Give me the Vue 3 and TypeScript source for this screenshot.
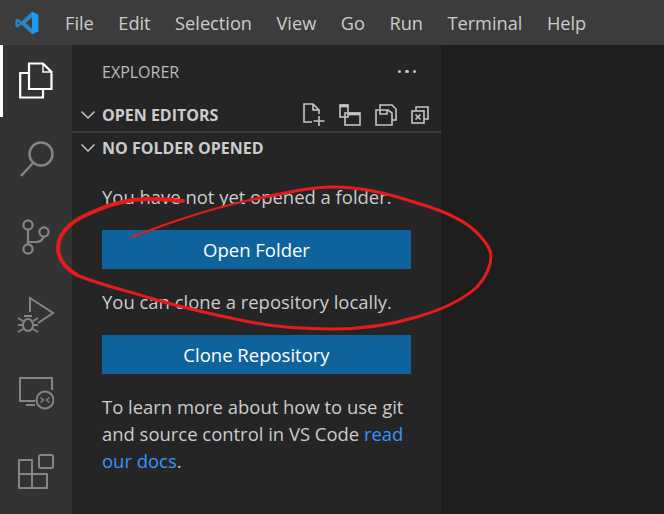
<script setup lang="ts">
const menus = ['File', 'Edit', 'Selection', 'View', 'Go', 'Run', 'Terminal', 'Help']
</script>

<template>
  <div class="window">
    <header class="titlebar">
      <svg class="logo" viewBox="0 0 26 26" width="24" height="24">
        <path d="M18.4 0.8 L25.2 4 V22 L18.4 25.2 L7 14.6 L2.8 18 L0.4 16.6 V9.4 L2.8 8 L7 11.4 Z M18.4 7.4 L11.4 13 L18.4 18.6 Z M2.9 10.7 V15.3 L5.2 13 Z" fill="#2489ca" fill-rule="evenodd" />
        <path d="M18.4 0.8 L25.2 4 V22 L18.4 25.2 Z" fill="#1f9cf0" />
      </svg>
      <nav class="menu">
        <span v-for="m in menus" :key="m" class="menu-item">{{ m }}</span>
      </nav>
    </header>

    <div class="main">
      <aside class="activity">
        <div class="act act-on">
          <svg viewBox="0 0 36 38" width="36" height="38" fill="none" stroke="#fff" stroke-width="2.2">
            <path d="M11 1.5 H25 L33.5 10 V27 H11 Z" />
            <path d="M25 1.5 V10 H33.5" stroke-width="1.4" />
            <path d="M11 11 H2.2 V35.5 H25 V27" />
          </svg>
        </div>
        <div class="act">
          <svg viewBox="0 0 36 38" width="36" height="38" fill="none" stroke="#858585" stroke-width="2.4">
            <circle cx="23" cy="15" r="11.5" />
            <path d="M15 24 L3 37" />
          </svg>
        </div>
        <div class="act">
          <svg viewBox="0 0 28 36" width="28" height="36" fill="none" stroke="#858585" stroke-width="2.2">
            <circle cx="6" cy="6" r="4.6" />
            <circle cx="6" cy="30" r="4.6" />
            <circle cx="22" cy="13" r="4.6" />
            <path d="M6 10.6 V25.4 M6 23 H14 C18 23 20.5 21 21.5 17.6" />
          </svg>
        </div>
        <div class="act">
          <svg viewBox="0 0 38 38" width="38" height="38" fill="none" stroke="#858585" stroke-width="2">
            <path d="M13 16 V2 L36 17 L21 27" />
            <ellipse cx="11" cy="29" rx="5" ry="6" />
            <path d="M1 22 L6 25 M1 29 H6 M1 36 L6 33 M21 22 L16 25 M21 29 H16 M21 36 L16 33 M7 20 H15" />
          </svg>
        </div>
        <div class="act">
          <svg viewBox="0 0 36 36" width="36" height="36" fill="none" stroke="#858585" stroke-width="2">
            <path d="M17 25 H2 V2 H34 V14" />
            <path d="M8 29 H17" />
            <circle cx="27" cy="24" r="8.5" />
            <path d="M22.5 21.5 L25.5 24 L22.5 26.5 M31.5 21.5 L28.5 24 L31.5 26.5" stroke-width="1.5" />
          </svg>
        </div>
        <div class="act">
          <svg viewBox="0 0 38 38" width="38" height="38" fill="none" stroke="#858585" stroke-width="2" stroke-linejoin="round">
            <path d="M2 7 H15 V35 H2 Z M2 21 H30 V35 H15" />
            <rect x="22" y="2" width="14" height="13" rx="1.5" />
          </svg>
        </div>
      </aside>

      <section class="sidebar">
        <div class="side-head">
          <span>EXPLORER</span>
          <span class="dots"><i /><i /><i /></span>
        </div>
        <div class="section-row open-editors">
          <svg class="chev" viewBox="0 0 16 10" width="16" height="10" fill="none" stroke="#c5c5c5" stroke-width="1.5"><path d="M1.5 1.5 L8 8 L14.5 1.5" /></svg>
          <span class="section-title">OPEN EDITORS</span>
          <div class="tools">
            <svg viewBox="0 0 22 24" width="22" height="24" fill="none" stroke="#c5c5c5" stroke-width="1.6">
              <path d="M9 19 H1 V1 H10 L16 7 V11 M10 1 V7 H16 M16 13 V23 M10.5 18 H21.5" />
            </svg>
            <svg viewBox="0 0 22 22" width="22" height="22" fill="none" stroke="#c5c5c5" stroke-width="1.6">
              <rect x="1" y="1" width="8" height="12" />
              <path d="M1 2 H9" stroke-width="2.6" />
              <rect x="6" y="9" width="15" height="12" />
              <path d="M9 10 H21" stroke-width="2.6" />
            </svg>
            <svg viewBox="0 0 22 22" width="22" height="22" fill="none" stroke="#c5c5c5" stroke-width="1.6">
              <path d="M5 5 V1 H17 L21 5 V16 H17" />
              <path d="M1 6 H13 L17 9 V21 H1 Z" />
              <path d="M5 6 V10 H12 V6" />
            </svg>
            <svg viewBox="0 0 18 18" width="18" height="18" fill="none" stroke="#c5c5c5" stroke-width="1.6">
              <path d="M5 4 V1 H17 V13 H13" />
              <rect x="1" y="5" width="12" height="12" />
              <path d="M4.5 8.5 L9.5 13.5 M9.5 8.5 L4.5 13.5" />
            </svg>
          </div>
        </div>
        <div class="section-row no-folder">
          <svg class="chev" viewBox="0 0 16 10" width="16" height="10" fill="none" stroke="#c5c5c5" stroke-width="1.5"><path d="M1.5 1.5 L8 8 L14.5 1.5" /></svg>
          <span class="section-title">NO FOLDER OPENED</span>
        </div>
        <div class="welcome">
          <p class="first">You have not yet opened a folder.</p>
          <button class="btn">Open Folder</button>
          <p class="second">You can clone a repository locally.</p>
          <button class="btn">Clone Repository</button>
          <p class="third">To learn more about how to use git and source control in VS Code <a>read</a> <a>our docs</a>.</p>
        </div>
      </section>

      <div class="editor"></div>
    </div>

    <svg class="scribble" viewBox="0 0 664 514" width="664" height="514" fill="none" stroke="#e61c1c" stroke-linecap="round" stroke-linejoin="round">
      <path stroke-width="2.2" d="M132 237 C165 224 205 210 250 200" />
      <path stroke-width="3" d="M250 200 C290 192 310 187 333 187 C365 187 392 195 417 203 C448 212 470 224 480 236 C488 245 491 250 491 256 C491 268 485 278 477 287 C460 302 440 310 417 317 C390 325 360 329 333 329 C305 329 275 327 250 322 C215 315 180 307 150 298 C125 290 100 285 77 275" />
      <path stroke-width="4" d="M77 275 C65 268 58 258 58 248 C58 238 63 231 70 225 C77 219 85 215 93 212 C108 205 120 202 133 200 C148 198 165 199 183 201" />
    </svg>
  </div>
</template>

<style>
html, body {
  margin: 0;
  background: #1e1e1e;
}
</style>

<style scoped>
.window {
  position: relative;
  width: 664px;
  height: 514px;
  overflow: hidden;
  display: flex;
  flex-direction: column;
  font-family: "Open Sans", "Noto Sans", sans-serif;
  color: #ccc;
}
.titlebar {
  height: 45px;
  flex: none;
  background: #3c3c3c;
  display: flex;
  align-items: center;
  padding-left: 15px;
}
.logo {
  flex: none;
}
.menu {
  display: flex;
  margin-left: 26px;
  font-size: 18.2px;
  color: #cccccc;
}
.menu-item {
  margin-right: 24.5px;
}
.main {
  flex: 1;
  display: flex;
  min-height: 0;
}
.activity {
  width: 72px;
  flex: none;
  background: #333333;
}
.act {
  height: 78.5px;
  display: flex;
  align-items: center;
  justify-content: center;
  box-sizing: border-box;
}
.act-on {
  height: 72px;
  margin-bottom: 2px;
  border-left: 3px solid #fff;
  padding-right: 3px;
}
.sidebar {
  width: 369px;
  flex: none;
  background: #252526;
  box-sizing: border-box;
}
.side-head {
  height: 53px;
  display: flex;
  align-items: center;
  justify-content: space-between;
  padding: 0 25px 0 30px;
  font-size: 16px;
  color: #bbbbbb;
}
.dots {
  display: flex;
  gap: 4px;
}
.dots i {
  width: 3.5px;
  height: 3.5px;
  border-radius: 50%;
  background: #c5c5c5;
}
.section-row {
  display: flex;
  align-items: center;
  padding-left: 8px;
  box-sizing: border-box;
}
.open-editors {
  height: 35px;
  border-bottom: 2px solid #3c3c3c;
}
.no-folder {
  height: 30px;
}
.chev {
  flex: none;
  margin-right: 6px;
}
.section-title {
  font-size: 16px;
  font-weight: 700;
  color: #cccccc;
}
.tools {
  display: flex;
  align-items: center;
  gap: 14px;
  margin-left: auto;
  margin-right: 12px;
}
.welcome {
  padding: 0 30px;
  font-size: 18.45px;
  line-height: 27px;
}
.welcome p {
  margin: 0;
}
.welcome .first {
  padding-top: 20px;
  margin-bottom: 20px;
}
.welcome .second {
  margin-top: 19px;
  margin-bottom: 20px;
}
.welcome .third {
  margin-top: 19px;
}
.btn {
  display: block;
  width: 100%;
  height: 39px;
  border: none;
  padding: 0;
  background: #0e639c;
  color: #fff;
  font: inherit;
  font-size: 18.5px;
}
.welcome a {
  color: #3794ff;
}
.editor {
  flex: 1;
  background: #1e1e1e;
}
.scribble {
  position: absolute;
  left: 0;
  top: 0;
  pointer-events: none;
}
</style>
